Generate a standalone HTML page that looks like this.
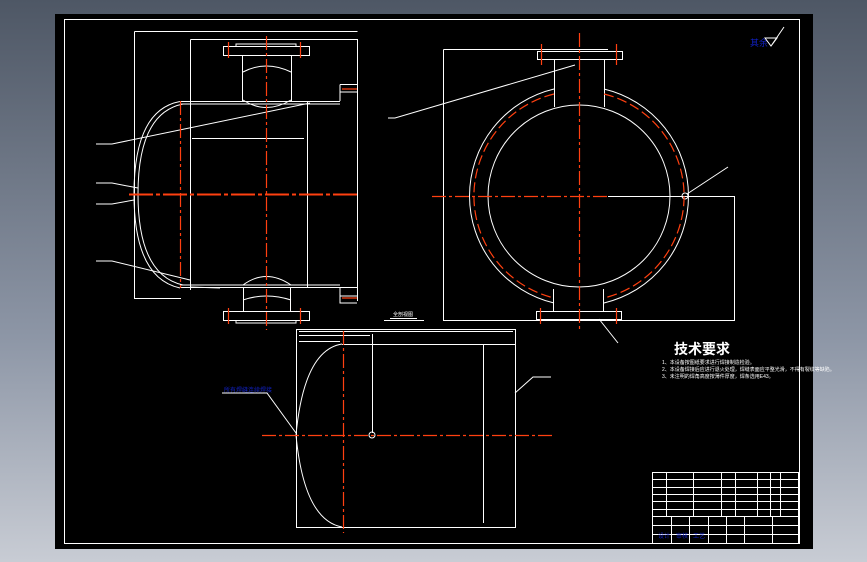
<!DOCTYPE html>
<html><head><meta charset="utf-8"><style>
html,body{margin:0;padding:0;width:867px;height:562px;overflow:hidden;background:linear-gradient(#4e5765,#8d96a6 60%,#c8ccd4);}
svg{position:absolute;left:0;top:0}
</style></head><body>
<svg width="867" height="562" viewBox="0 0 867 562" font-family="Liberation Sans, Noto Sans CJK SC, sans-serif">
<rect x="55" y="14" width="758" height="535" fill="#000"/>
<g fill="none" stroke="#fff" stroke-width="1">
<rect x="64.5" y="19.5" width="735" height="524"/>
<!-- front view -->
<path d="M134.5 31.5H357.5M134.5 31.5V298.5H181"/>
<path d="M190.5 39.5H357.5V301M190.5 39.5V290"/>
<rect x="223.5" y="46.5" width="86" height="9"/>
<path d="M236 46.5V44H296V46.5"/>
<path d="M242.5 55.5V101M291.5 55.5V101M243 72Q266 60 291 72M243 100Q266 115 291 100"/>
<path d="M180 101.5H340M180 104H340M307.5 101V287"/>
<path d="M180 101.5Q134 110 134 194Q134 278 180 288M183 104Q138 113 138 194Q138 275 183 285"/>
<path d="M180 287.5H340M180 285H340"/>
<path d="M340 84.5H357M340 84.5V101M340 92H357"/>
<path d="M340 287.5H357M340 287.5V303H357M340 296H357"/>
<path d="M243.5 287V311M290.5 287V311M243 285Q266 268 291 285M243 300Q266 292 291 300"/>
<rect x="223.5" y="311.5" width="86" height="9"/>
<path d="M236 320.5V323H296V320.5"/>
<path d="M192 138.5H304"/>
<path d="M96 144H112L310 103M96 183H112L138 188M96 204H112L134 200M96 261H112L190 280M190 287L220 288"/>
<!-- side view -->
<path d="M443.5 49.5H608M443.5 49.5V320.5H734.5V196.5H608"/>
<rect x="537.5" y="51.5" width="85" height="8"/>
<path d="M554.5 59V107M604.5 59V107M553.5 289V311M603.5 289V311"/>
<rect x="536.5" y="311.5" width="85" height="8"/>
<path d="M554 89A110 110 0 0 0 554 303M604 89A110 110 0 0 1 604 303"/>
<circle cx="579" cy="196" r="91"/>
<circle cx="685" cy="196" r="3"/>
<path d="M687 194L728 167M388 118H395L575 65M599 319L618 343"/>
<!-- bottom view -->
<rect x="296.5" y="329.5" width="219" height="198"/>
<path d="M299 331.5H513M299 335.5H370M299 341.5H340M342 344.5H515M483.5 344V523M372.5 334V433"/>
<path d="M342 344Q304 350 296 435Q304 520 342 527"/>
<path d="M222 393H267L296 433M515 393L533 377H551"/>
<circle cx="372" cy="435" r="3"/>
<!-- title block -->
<rect x="652.5" y="472.5" width="146" height="71"/>
<path d="M652 479.5H798M652 487.5H798M652 494.5H798M652 501.5H798M652 509.5H798M652 516.5H798M652 525.5H798M652 534.5H798"/>
<path d="M666.5 472V516M693.5 472V516M721.5 472V516M735.5 472V516M757.5 472V516M770.5 472V516M780.5 472V516"/>
<path d="M671.5 516V543M689.5 516V543M708.5 516V543M726.5 516V543M744.5 516V543M772.5 516V543"/>
<path d="M384 320.5H424M390 318.5H417"/>
</g>
<g stroke="#ff4010" stroke-width="1.2" fill="none">
<path d="M129 194.5H357" stroke-width="2" stroke-dasharray="24 3 4 3"/>
<path d="M266.5 36V330M180.5 101V288" stroke-dasharray="14 3 3 3"/>
<path d="M228.5 42V58M300.5 42V58M228.5 308V324M300.5 308V324M342 89H357M342 298H357"/>
<path d="M579.5 33V330M432 196.5H608" stroke-dasharray="14 3 3 3"/>
<path d="M541.5 44V65M616.5 44V65M540.5 308V324M616.5 308V324"/>
<path d="M554 94A105 105 0 0 0 554 298M604 94A105 105 0 0 1 604 298" stroke-dasharray="10 4"/>
<path d="M343.5 331V533M262 435.5H554" stroke-dasharray="14 3 3 3"/>
</g>
<g fill="#fff" font-size="5">
<text x="674" y="354" font-size="14" font-weight="bold">技术要求</text>
<text x="662" y="364">1、本设备按图纸要求进行焊接制造检验。</text>
<text x="662" y="371">2、本设备焊接后应进行退火处理，焊缝表面应平整光滑，不得有裂纹等缺陷。</text>
<text x="662" y="378">3、未注明的焊角高度按薄件厚度，焊条选用E43。</text>
<text x="393" y="316" font-size="5">全剖视图</text>
</g>
<g fill="#1020c0" font-size="6">
<text x="750" y="46" font-size="9">其余</text>
<text x="224" y="392">所有焊缝连续焊接</text>
<text x="658" y="538">设计</text><text x="676" y="538">审核</text><text x="693" y="538">工艺</text>
</g>
<path d="M765 38L771 46L777 38ZM771 46L784 27" fill="none" stroke="#fff" stroke-width="1"/>
</svg>
</body></html>
